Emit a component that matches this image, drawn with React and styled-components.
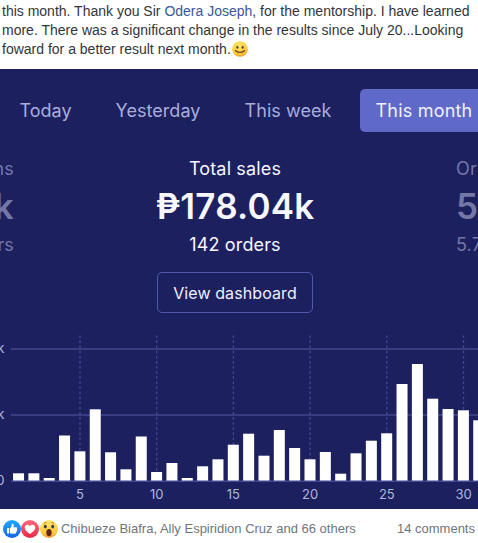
import React from "react";
import styled, { createGlobalStyle } from "styled-components";

const GlobalStyle = createGlobalStyle`
  * {
    box-sizing: border-box;
  }
  body {
    margin: 0;
    background: #fff;
    overflow: hidden;
  }
`;

// Sales per day of the month, in chart pixels
const SALES = [
  7.7, 7.7, 3, 45.5, 29.7, 71.7, 28.7, 11.7, 44.5, 9, 18, 3, 14.7, 21.7, 36.3, 47.3,
  25.3, 51, 33, 21.7, 29, 7.3, 27.7, 40.3, 47.7, 97, 117, 82.3, 72, 70.7, 60.7,
];
const TICKS = [5, 10, 15, 20, 25, 30];
const dayX = (day) => 80 + (day - 5) * 15.34;

function SmileIcon() {
  return (
    <Emoji viewBox="0 0 16 16">
      <defs>
        <radialGradient id="smile" cx="45%" cy="30%" r="70%">
          <stop offset="0" stopColor="#ffe768" />
          <stop offset="0.65" stopColor="#ffcf43" />
          <stop offset="1" stopColor="#f3a02c" />
        </radialGradient>
      </defs>
      <circle cx="8" cy="8" r="7.8" fill="url(#smile)" />
      <ellipse cx="5.4" cy="6.2" rx="1" ry="1.5" fill="#50412d" />
      <ellipse cx="10.6" cy="6.2" rx="1" ry="1.5" fill="#50412d" />
      <path d="M3.4 9.4Q8 13.4 12.6 9.4" fill="none" stroke="#7a4a1c" strokeWidth="1.3" strokeLinecap="round" />
    </Emoji>
  );
}

function LikeIcon() {
  return (
    <Reaction viewBox="0 0 18 18">
      <defs>
        <linearGradient id="like" x1="0" y1="0" x2="0" y2="1">
          <stop offset="0" stopColor="#21aaff" />
          <stop offset="1" stopColor="#1763ee" />
        </linearGradient>
      </defs>
      <circle cx="9" cy="9" r="9" fill="url(#like)" />
      <rect x="4" y="8" width="2.2" height="5.6" rx="0.6" fill="#fff" />
      <path
        d="M7 8.2C8.3 7.3 8.7 6 8.7 4.5C8.7 3.3 10.8 3.3 10.8 5.3C10.8 6.3 10.4 7.2 10.4 7.2H13.2C14.5 7.2 14.6 8.6 13.8 9C14.6 9.5 14.3 10.6 13.5 10.9C13.9 11.6 13.5 12.2 12.9 12.4C13 13.3 12.4 13.7 11.5 13.7H9.4C8.2 13.7 7.6 13.3 7 12.9Z"
        fill="#fff"
      />
    </Reaction>
  );
}

function LoveIcon() {
  return (
    <Reaction viewBox="0 0 18 18">
      <defs>
        <linearGradient id="love" x1="0" y1="0" x2="0" y2="1">
          <stop offset="0" stopColor="#ff687b" />
          <stop offset="1" stopColor="#e92849" />
        </linearGradient>
      </defs>
      <circle cx="9" cy="9" r="9" fill="url(#love)" />
      <path
        d="M9 14C6.2 12.3 3.7 10.2 3.7 7.6C3.7 4.7 7.4 3.6 9 6.3C10.6 3.6 14.3 4.7 14.3 7.6C14.3 10.2 11.8 12.3 9 14Z"
        fill="#fff"
      />
    </Reaction>
  );
}

function WowIcon() {
  return (
    <Reaction viewBox="0 0 18 18">
      <defs>
        <linearGradient id="wow" x1="0" y1="0" x2="0" y2="1">
          <stop offset="0" stopColor="#ffe76c" />
          <stop offset="0.7" stopColor="#ffc940" />
          <stop offset="1" stopColor="#f29b38" />
        </linearGradient>
      </defs>
      <circle cx="9" cy="9" r="9" fill="url(#wow)" />
      <path d="M3.8 3.7Q5 2.2 6.7 2.8M11.3 2.8Q13 2.2 14.2 3.7" fill="none" stroke="#c27a28" strokeWidth="1" />
      <ellipse cx="5.3" cy="6.6" rx="1.4" ry="1.9" fill="#34394a" />
      <ellipse cx="12.7" cy="6.6" rx="1.4" ry="1.9" fill="#34394a" />
      <ellipse cx="9" cy="12.6" rx="2.7" ry="3.7" fill="#642512" />
    </Reaction>
  );
}

function SalesChart() {
  return (
    <Chart viewBox="0 330 478 179">
      {TICKS.map((day) => (
        <GridLine key={day} $dotted x1={dayX(day)} x2={dayX(day)} y1="335.5" y2="481" />
      ))}
      <GridLine x1="11" x2="478" y1="349" y2="349" />
      <GridLine x1="11" x2="478" y1="415" y2="415" />
      {SALES.map((height, i) => (
        <rect key={i} x={dayX(i + 1) - 5.6} y={481 - height} width="11" height={height} fill="#fff" />
      ))}
      <GridLine x1="11" x2="478" y1="481.3" y2="481.3" />
      <AxisText x="4.5" y="353" textAnchor="end">k</AxisText>
      <AxisText x="4.5" y="419" textAnchor="end">k</AxisText>
      <AxisText x="4.5" y="485" textAnchor="end">0</AxisText>
      {TICKS.map((day) => (
        <AxisText key={day} x={dayX(day)} y="499" textAnchor="middle">{day}</AxisText>
      ))}
    </Chart>
  );
}

export default function App() {
  return (
    <Post>
      <GlobalStyle />
      <Message>
        <Line>
          this month. Thank you Sir <Mention>Odera Joseph</Mention>, for the mentorship. I have learned
        </Line>
        <Line>more. There was a significant change in the results since July 20...Looking</Line>
        <Line>
          foward for a better result next month.
          <SmileIcon />
        </Line>
      </Message>
      <Dashboard>
        <Tabs>
          <Tab $width="91px">Today</Tab>
          <Tab $width="134px">Yesterday</Tab>
          <Tab $width="126px">This week</Tab>
          <ActiveTab $width="128px">This month</ActiveTab>
        </Tabs>
        <Stats>
          <Stat $align="flex-end" $faded>
            <StatLabel>ns</StatLabel>
            <StatValue>k</StatValue>
            <StatLabel>rs</StatLabel>
          </Stat>
          <Stat $align="center">
            <StatLabel>Total sales</StatLabel>
            <StatValue>₱178.04k</StatValue>
            <StatLabel>142 orders</StatLabel>
          </Stat>
          <Stat $align="flex-start" $faded>
            <StatLabel>Or</StatLabel>
            <StatValue>5</StatValue>
            <StatLabel>5.7</StatLabel>
          </Stat>
        </Stats>
        <ViewButton>View dashboard</ViewButton>
        <SalesChart />
      </Dashboard>
      <Footer>
        <Reactions>
          <LikeIcon />
          <LoveIcon />
          <WowIcon />
          <Names>Chibueze Biafra, Ally Espiridion Cruz and 66 others</Names>
        </Reactions>
        <Comments>14 comments</Comments>
      </Footer>
    </Post>
  );
}

const Post = styled.article`
  width: 478px;
  height: 543px;
  display: flex;
  flex-direction: column;
  overflow: hidden;
  background: #fff;
  font-family: "Liberation Sans", Arial, sans-serif;
`;
const Message = styled.div`
  height: 69px;
  padding: 2px 0 0 2px;
  font-size: 14px;
  color: #32353b;
`;
const Line = styled.div`
  display: flex;
  height: 19px;
  line-height: 19px;
  white-space: pre;
`;
const Mention = styled.span`
  color: #385898;
`;
const Emoji = styled.svg`
  width: 16px;
  height: 16px;
  margin: 1px 0 0 1px;
`;
const Dashboard = styled.section`
  flex: none;
  height: 440px;
  display: flex;
  flex-direction: column;
  align-items: center;
  overflow: hidden;
  background: #1d205f;
  font-family: Inter, sans-serif;
`;
const Tabs = styled.nav`
  align-self: flex-start;
  display: flex;
  flex: none;
  height: 43px;
  margin-top: 20px;
`;
const Tab = styled.div`
  flex: none;
  width: ${({ $width }) => $width};
  line-height: 44px;
  text-align: center;
  font-size: 18px;
  letter-spacing: 0.05px;
  white-space: nowrap;
  color: #a9addb;
`;
const ActiveTab = styled(Tab)`
  margin-left: 9px;
  letter-spacing: 0.2px;
  color: #f0f1ff;
  background: #5f69c8;
  border-radius: 5px;
`;
const Stats = styled.div`
  display: grid;
  grid-template-columns: 14px 442px 22px;
  width: 478px;
  height: 130px;
  margin-top: 25px;
`;
const Stat = styled.div`
  display: flex;
  flex-direction: column;
  align-items: ${({ $align }) => $align};
  color: ${({ $faded }) => ($faded ? "#7477a6" : "#f7f7ff")};
  overflow: hidden;
`;
const StatLabel = styled.div`
  flex: none;
  line-height: 24px;
  font-size: 18px;
  letter-spacing: 0.15px;
  white-space: nowrap;
`;
const StatValue = styled.div`
  flex: none;
  margin-bottom: 2px;
  line-height: 50px;
  font-size: 35px;
  font-weight: 600;
  letter-spacing: 0.2px;
  white-space: nowrap;
`;
const ViewButton = styled.button`
  flex: none;
  width: 156px;
  height: 41px;
  margin: -15px 0 0 -8px;
  padding: 0;
  border: 1px solid #5158ab;
  border-radius: 5px;
  background: transparent;
  color: #eeefff;
  font: 400 16px Inter, sans-serif;
  letter-spacing: 0.1px;
`;
const Chart = styled.svg`
  flex: none;
  width: 478px;
  height: 179px;
  margin-top: 17px;
`;
const GridLine = styled.line`
  stroke: ${({ $dotted }) => ($dotted ? "#464a8b" : "#42478f")};
  stroke-width: ${({ $dotted }) => ($dotted ? 1.3 : 1.5)};
  stroke-dasharray: ${({ $dotted }) => ($dotted ? "2.5 2.6" : "none")};
`;
const AxisText = styled.text`
  font: 400 13px Inter, sans-serif;
  fill: #b2b5dc;
`;
const Footer = styled.footer`
  display: flex;
  justify-content: space-between;
  align-items: center;
  height: 34px;
  padding: 5px 3px 0 3px;
  font-size: 13px;
  color: #70757d;
  white-space: nowrap;
`;
const Reactions = styled.div`
  display: flex;
  align-items: center;
`;
const Reaction = styled.svg`
  width: 18px;
  height: 18px;
  margin-right: 0.3px;
`;
const Names = styled.span`
  margin-left: 3px;
`;
const Comments = styled.span``;
